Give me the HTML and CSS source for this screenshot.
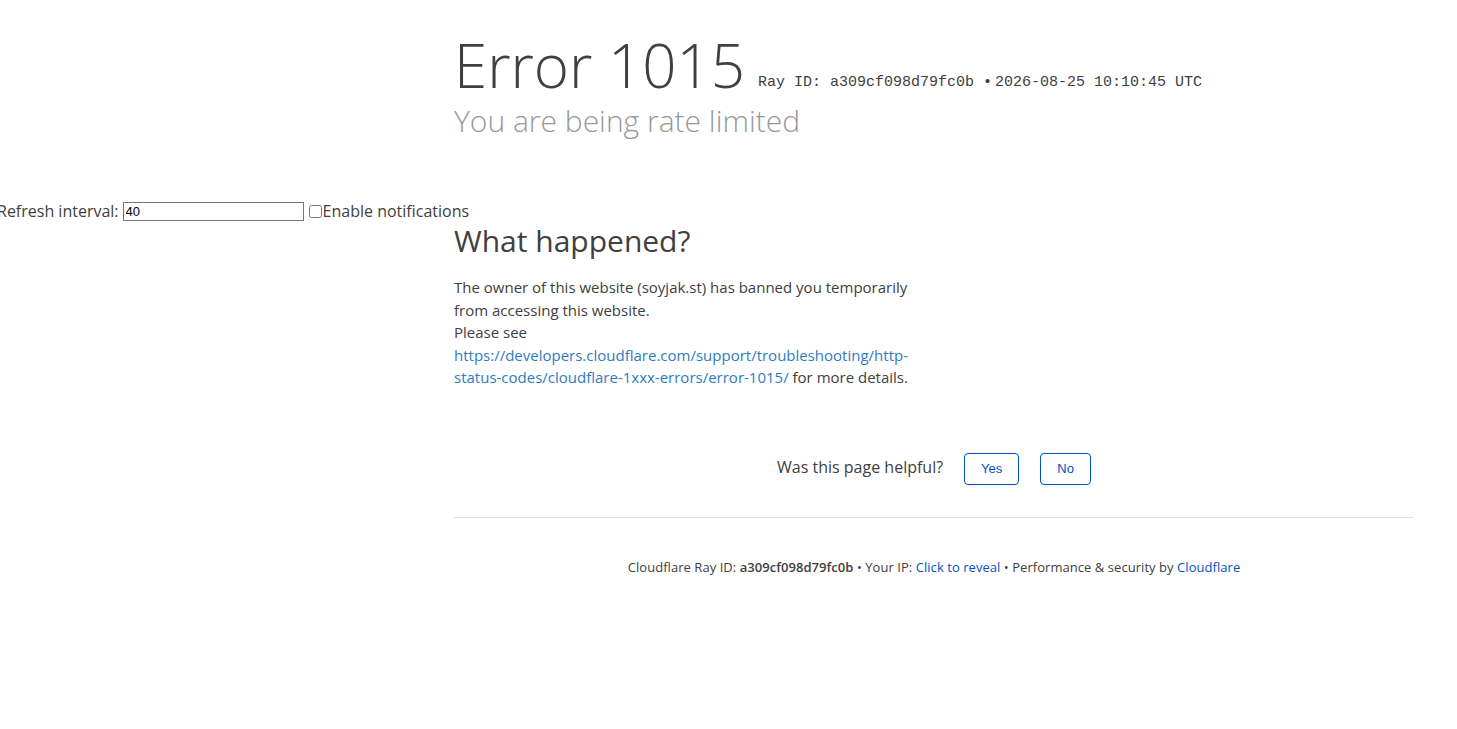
FILE: index.html
```html
<!DOCTYPE html>
<html lang="en">
<head>
    <meta charset="UTF-8">
    <meta name="viewport" content="width=device-width, initial-scale=1.0">
    <title>Attention Required! | Cloudflare</title>
    <link rel="stylesheet" href="styles.css">
</head>
<body>
    <div class="refresh-bar">
        <label for="interval">Refresh interval:</label><input type="text" id="interval" value="40"><input type="checkbox" id="notify"><label for="notify">Enable notifications</label>
    </div>

    <main class="wrapper">
        <header class="error-head">
            <h1 class="error-title"><span class="error-code">Error 1015</span><small class="ray-id">Ray ID: a309cf098d79fc0b &bull;</small><small class="ray-id">2026-08-25 10:10:45 UTC</small></h1>
            <h2 class="error-sub">You are being rate limited</h2>
        </header>

        <section class="details">
            <h2>What happened?</h2>
            <p>The owner of this website (soyjak.st) has banned you temporarily from accessing this website.<br>
            Please see <a href="#">https://developers.cloudflare.com/support/troubleshooting/http-status-codes/cloudflare-1xxx-errors/error-1015/</a> for more details.</p>
        </section>

        <div class="feedback">
            <span>Was this page helpful?</span>
            <button class="feedback-btn">Yes</button>
            <button class="feedback-btn">No</button>
        </div>

        <footer class="footer">
            <p>
                Cloudflare Ray ID: <strong>a309cf098d79fc0b</strong> &bull;
                Your IP: <a href="#">Click to reveal</a> &bull;
                Performance &amp; security by <a href="#">Cloudflare</a>
            </p>
        </footer>
    </main>
</body>
</html>
```

FILE: styles.css
```css
body {
    margin: 0;
    font-family: 'Open Sans', 'Noto Sans', sans-serif;
    color: #404040;
    background-color: #fff;
}

a {
    color: #2f7bbf;
    text-decoration: none;
}

/* injected refresh controls sit on top of the page */
.refresh-bar {
    position: absolute;
    top: 201px;
    left: -3px;
    display: flex;
    align-items: center;
    font-size: 16px;
    line-height: 20px;
    white-space: nowrap;
}

.refresh-bar label[for="interval"] {
    margin-right: 4px;
}

.refresh-bar input[type="text"] {
    width: 175px;
    height: 15px;
    margin: 0;
    padding: 1px 2px;
    border: 1px solid #767676;
    font-family: 'Liberation Sans', sans-serif;
    font-size: 13px;
    color: #000;
}

.refresh-bar input[type="checkbox"] {
    width: 13px;
    height: 13px;
    margin: 0 1px 0 5px;
}

.wrapper {
    width: 960px;
    margin-left: 454px;
    padding-top: 29px;
}

.error-title {
    margin: 0;
    font-size: 60px;
    font-weight: 300;
    line-height: 1.2;
}

.ray-id {
    font-family: 'Liberation Mono', monospace;
    font-size: 15px;
    font-weight: 400;
    vertical-align: 2px;
}

.error-code + .ray-id {
    margin-left: 13px;
}

.ray-id + .ray-id {
    margin-left: 3px;
}

.error-sub {
    margin: 2px 0 0;
    font-size: 30px;
    font-weight: 300;
    line-height: 1.2;
    color: #999;
}

.details {
    width: 465px;
    margin-top: 84px;
}

.details h2 {
    margin: 0;
    font-size: 30px;
    font-weight: 400;
    line-height: 1.2;
}

.details p {
    margin: 17px 0 0;
    font-size: 15px;
    line-height: 1.5;
}

.feedback {
    display: flex;
    justify-content: center;
    align-items: center;
    gap: 21px;
    margin-top: 64px;
    padding-bottom: 32px;
    border-bottom: 1px solid #e2e2e2;
    font-size: 16px;
}

.feedback span {
    margin-bottom: 3px;
}

.feedback-btn {
    height: 32px;
    padding: 0 16px;
    border: 1px solid #0051c3;
    border-radius: 4px;
    background-color: #fff;
    color: #0051c3;
    font-family: 'Liberation Sans', sans-serif;
    font-size: 13px;
}

.footer {
    text-align: center;
    font-size: 13px;
    letter-spacing: 0.05px;
}

.footer p {
    margin: 40px 0 0;
}

.footer a {
    color: #0051c3;
}

.footer strong {
    font-weight: 600;
}
```
